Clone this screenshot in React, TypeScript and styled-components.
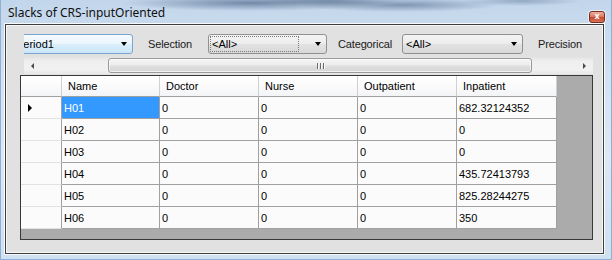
import React from "react";
import styled, { createGlobalStyle } from "styled-components";

const Global = createGlobalStyle`
  html, body { margin: 0; padding: 0; width: 612px; height: 260px; overflow: hidden; background: #c6d9ee; }
  #root { width: 612px; height: 260px; }
`;

const Window = styled.div`
  width: 612px;
  height: 260px;
  box-sizing: border-box;
  display: flex;
  flex-direction: column;
  overflow: hidden;
  border-left: 1px solid #8fb0d4;
  border-right: 1px solid #8fb0d4;
  border-bottom: 1px solid #8fb0d4;
  background:
    radial-gradient(ellipse 130px 8px at 250px 3px, rgba(60, 85, 120, 0.6), rgba(60, 85, 120, 0) 100%),
    radial-gradient(ellipse 100px 7px at 400px 5px, rgba(60, 85, 120, 0.5), rgba(60, 85, 120, 0) 100%),
    radial-gradient(ellipse 70px 5px at 330px 1px, rgba(60, 85, 120, 0.45), rgba(60, 85, 120, 0) 100%),
    radial-gradient(ellipse 60px 5px at 520px 1px, rgba(60, 85, 120, 0.35), rgba(60, 85, 120, 0) 100%),
    linear-gradient(180deg, #c2d6eb 0%, #d3e2f2 30%, #dbe8f5 60%, #cfe0f1 100%);
`;

const TitleBar = styled.div`
  height: 24px;
  flex: none;
  display: flex;
  align-items: center;
  justify-content: space-between;
  padding: 0 6px 0 7px;
`;

const Title = styled.span`
  font-family: "Noto Sans", "Open Sans", sans-serif;
  font-size: 12px;
  line-height: 16px;
  margin-top: 1px;
  color: #111;
`;

const CloseButton = styled.div`
  align-self: flex-end;
  margin-bottom: 1px;
  width: 14px;
  height: 10px;
  border: 1px solid #7c2d1e;
  border-radius: 3px;
  background: linear-gradient(180deg, #eeb0a0 0%, #dc7c64 45%, #c84a30 55%, #d8755a 100%);
  box-shadow: 0 0 0 1px rgba(255, 255, 255, 0.55);
  display: flex;
  align-items: center;
  justify-content: center;
  color: #fff;
  font: bold 8px/8px "DejaVu Sans", sans-serif;
`;

const ClientFrame = styled.div`
  flex: 1;
  min-height: 0;
  margin: 0 7px 5px 4px;
  border: 1px solid #3e3e3e;
  background: #e1e1e1;
  box-shadow: 0 0 0 1px rgba(255, 255, 255, 0.85), inset 0 0 0 1px #f7f7f7;
  display: flex;
  flex-direction: column;
  padding: 9px 10px 0 14px;
`;

const ToolbarViewport = styled.div`
  margin-left: 4px;
  height: 20px;
  overflow: hidden;
  flex: none;
`;

const ToolbarStrip = styled.div`
  display: flex;
  align-items: center;
  height: 20px;
  margin-left: -12px;
  width: max-content;
`;

const Combo = styled.div<{ $w: number; $hot?: boolean; $ml?: number }>`
  width: ${(p) => p.$w}px;
  height: 20px;
  box-sizing: border-box;
  flex: none;
  margin-left: ${(p) => p.$ml ?? 0}px;
  border: 1px solid ${(p) => (p.$hot ? "#78a5d4" : "#909090")};
  border-radius: 3px;
  background: ${(p) =>
    p.$hot
      ? "linear-gradient(180deg, #f6fbfe 0%, #eaf5fd 50%, #dbeefb 51%, #cbe6f8 100%)"
      : "linear-gradient(180deg, #f4f4f4 0%, #ececec 50%, #e2e2e2 51%, #d9d9d9 100%)"};
  display: flex;
  align-items: center;
`;

const ComboText = styled.div<{ $focus?: boolean }>`
  flex: 1;
  height: 16px;
  box-sizing: border-box;
  margin: 0 16px 0 1px;
  padding-left: 1px;
  border: 1px dotted ${(p) => (p.$focus ? "#7a7a7a" : "transparent")};
  display: flex;
  align-items: center;
  font-family: "Liberation Sans", Arial, sans-serif;
  font-size: 11px;
  color: #000;
  white-space: nowrap;
  overflow: hidden;
`;

const DropArrow = styled.span`
  flex: none;
  width: 0;
  height: 0;
  margin-right: 5px;
  border-left: 3.5px solid transparent;
  border-right: 3.5px solid transparent;
  border-top: 4px solid #000;
`;

const Label = styled.span<{ $w: number; $ml: number }>`
  flex: none;
  width: ${(p) => p.$w}px;
  margin-left: ${(p) => p.$ml}px;
  font-family: "Liberation Sans", Arial, sans-serif;
  font-size: 11px;
  letter-spacing: -0.15px;
  color: #1a1a1a;
  white-space: nowrap;
`;

const HScroll = styled.div`
  margin: 3px 0 0 4px;
  height: 17px;
  flex: none;
  display: flex;
  background: linear-gradient(180deg, #e3e3e3 0%, #efefef 25%, #f1f1f1 75%, #e8e8e8 100%);
`;

const ScrollButton = styled.div`
  width: 17px;
  flex: none;
  display: flex;
  align-items: center;
  justify-content: center;
`;

const ArrowLeft = styled.span`
  width: 0;
  height: 0;
  border-top: 3.5px solid transparent;
  border-bottom: 3.5px solid transparent;
  border-right: 3.5px solid #4a4a4a;
`;

const ArrowRight = styled.span`
  width: 0;
  height: 0;
  border-top: 3.5px solid transparent;
  border-bottom: 3.5px solid transparent;
  border-left: 3.5px solid #4a4a4a;
`;

const Track = styled.div`
  flex: 1;
  display: flex;
  align-items: center;
`;

const Thumb = styled.div`
  margin-left: 67px;
  width: 424px;
  height: 15px;
  box-sizing: border-box;
  border: 1px solid #9a9a9a;
  border-radius: 3px;
  background: linear-gradient(180deg, #f6f6f6 0%, #ececec 45%, #dedede 55%, #d6d6d6 100%);
  box-shadow: inset 0 0 0 1px rgba(255, 255, 255, 0.6);
  display: flex;
  align-items: center;
  justify-content: center;
  gap: 2px;
`;

const GripLine = styled.span`
  width: 1px;
  height: 6px;
  background: #6b6b6b;
  box-shadow: 1px 0 0 #fafafa;
`;

const Grid = styled.div`
  margin-top: 1px;
  height: 165px;
  box-sizing: border-box;
  flex: none;
  border: 1px solid #383838;
  background: #ababab;
  overflow: hidden;
`;

const Table = styled.div`
  display: grid;
  grid-template-columns: 41px 98px 99px 99px 99px 100px;
  grid-template-rows: 21px repeat(6, 22px);
  width: max-content;
  font-family: "Liberation Sans", Arial, sans-serif;
  font-size: 11px;
`;

const HeaderCell = styled.div`
  box-sizing: border-box;
  border-right: 1px solid #d0d0d0;
  border-bottom: 1px solid #a0a0a0;
  background: linear-gradient(180deg, #ffffff 0%, #fbfbfc 50%, #f3f4f6 100%);
  display: flex;
  align-items: center;
  padding-left: 6px;
  color: #000;
  white-space: nowrap;
`;

const RowHeader = styled.div`
  box-sizing: border-box;
  border-right: 1px solid #a0a0a0;
  border-bottom: 1px solid #e2e2e2;
  background: #fbfbfb;
  display: flex;
  align-items: center;
  padding-left: 7px;
`;

const RowPointer = styled.span`
  width: 0;
  height: 0;
  border-top: 4.5px solid transparent;
  border-bottom: 4.5px solid transparent;
  border-left: 4.5px solid #000;
`;

const Cell = styled.div<{ $selected?: boolean }>`
  box-sizing: border-box;
  border-right: 1px solid #a0a0a0;
  border-bottom: 1px solid #a0a0a0;
  background: ${(p) => (p.$selected ? "#3399ff" : "#fbfbfb")};
  color: ${(p) => (p.$selected ? "#ffffff" : "#000000")};
  display: flex;
  align-items: center;
  padding-left: 2px;
  white-space: nowrap;
`;

const columns = ["Name", "Doctor", "Nurse", "Outpatient", "Inpatient"];

const rows: string[][] = [
  ["H01", "0", "0", "0", "682.32124352"],
  ["H02", "0", "0", "0", "0"],
  ["H03", "0", "0", "0", "0"],
  ["H04", "0", "0", "0", "435.72413793"],
  ["H05", "0", "0", "0", "825.28244275"],
  ["H06", "0", "0", "0", "350"],
];

export default function App() {
  return (
    <>
      <Global />
      <Window>
        <TitleBar>
          <Title>Slacks of CRS-inputOriented</Title>
          <CloseButton>x</CloseButton>
        </TitleBar>
        <ClientFrame>
          <ToolbarViewport>
            <ToolbarStrip>
              <Combo $w={121} $hot>
                <ComboText>Period1</ComboText>
                <DropArrow />
              </Combo>
              <Label $w={60} $ml={15}>Selection</Label>
              <Combo $w={119}>
                <ComboText $focus>&lt;All&gt;</ComboText>
                <DropArrow />
              </Combo>
              <Label $w={64} $ml={11}>Categorical</Label>
              <Combo $w={121}>
                <ComboText>&lt;All&gt;</ComboText>
                <DropArrow />
              </Combo>
              <Label $w={60} $ml={15}>Precision</Label>
            </ToolbarStrip>
          </ToolbarViewport>
          <HScroll>
            <ScrollButton>
              <ArrowLeft />
            </ScrollButton>
            <Track>
              <Thumb>
                <GripLine />
                <GripLine />
                <GripLine />
              </Thumb>
            </Track>
            <ScrollButton>
              <ArrowRight />
            </ScrollButton>
          </HScroll>
          <Grid>
            <Table>
              <HeaderCell />
              {columns.map((c) => (
                <HeaderCell key={c}>{c}</HeaderCell>
              ))}
              {rows.map((r, i) => (
                <React.Fragment key={r[0]}>
                  <RowHeader>{i === 0 && <RowPointer />}</RowHeader>
                  {r.map((v, j) => (
                    <Cell key={j} $selected={i === 0 && j === 0}>
                      {v}
                    </Cell>
                  ))}
                </React.Fragment>
              ))}
            </Table>
          </Grid>
        </ClientFrame>
      </Window>
    </>
  );
}
